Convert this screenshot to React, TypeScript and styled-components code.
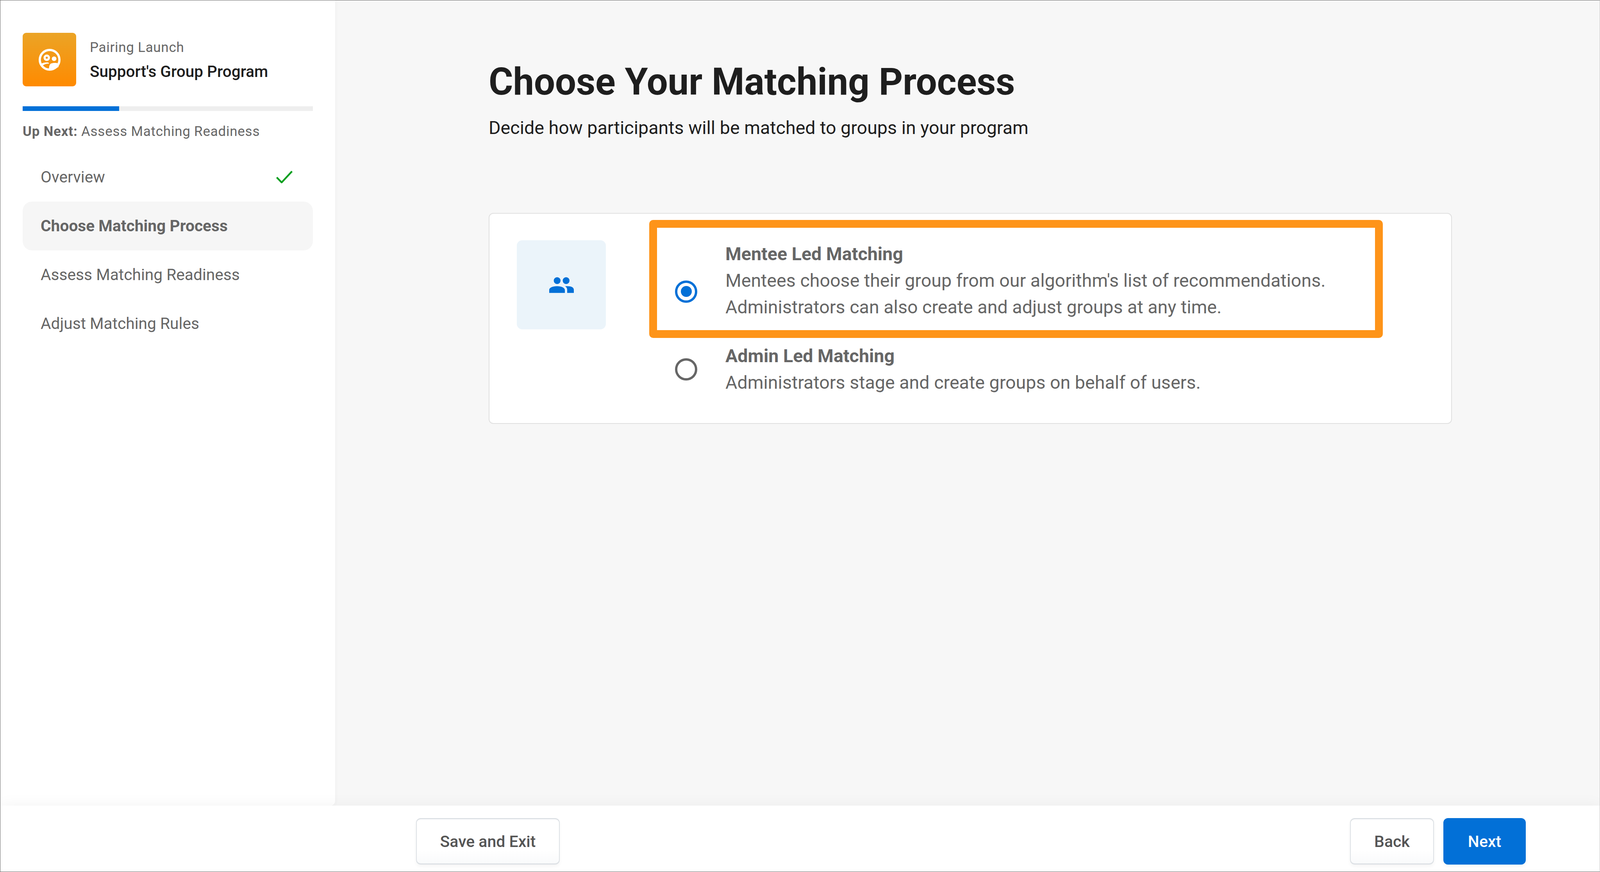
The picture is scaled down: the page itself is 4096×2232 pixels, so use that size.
import React from "react";
import styled, { createGlobalStyle } from "styled-components";

const Global = createGlobalStyle`
  html, body { margin: 0; padding: 0; background: #fff; }
  * { box-sizing: border-box; }
  body { font-family: Roboto, "Liberation Sans", sans-serif; }
`;

const Frame = styled("div")`
  width: 4096px;
  height: 2232px;
  display: flex;
  flex-direction: column;
  overflow: hidden;
  background: #f7f7f7;
  border: 1px solid #666;
  border-right-color: #c9c9c9;
`;

const Body = styled("div")`
  flex: 1;
  min-height: 0;
  display: flex;
`;

const Sidebar = styled("aside")`
  width: 857px;
  padding: 83px 57px 0;
  background: #fff;
  border-bottom-right-radius: 12px;
  box-shadow: 2px 0 8px rgba(0, 0, 0, 0.03);
`;

const Header = styled("div")`
  display: flex;
  align-items: center;
  gap: 35px;
`;

const Logo = styled("div")`
  width: 137px;
  height: 137px;
  border-radius: 9px;
  display: flex;
  align-items: center;
  justify-content: center;
  background: linear-gradient(180deg, #eba426, #ff8a00);
`;

const Eyebrow = styled("div")`
  font-size: 35px;
  line-height: 44px;
  letter-spacing: 0.7px;
  color: #666;
`;

const ProgramName = styled("div")`
  margin-top: 17px;
  margin-bottom: 1px;
  font-size: 40.5px;
  line-height: 44px;
  font-weight: 500;
  color: #1e1e1e;
`;

const Progress = styled("div")`
  height: 12px;
  margin-top: 51px;
  background: #eee;
`;

const ProgressFill = styled("div")<{ $value: number }>`
  height: 100%;
  width: ${({ $value }) => $value}%;
  background: #0270d7;
`;

const UpNext = styled("div")`
  margin-top: 31px;
  font-size: 34.9px;
  line-height: 44px;
  letter-spacing: 0.8px;
  color: #666;

  strong {
    font-weight: 700;
  }
`;

const NavList = styled("ul")`
  list-style: none;
  margin: 32px 0 0;
  padding: 0;
`;

const NavItem = styled("li")<{ $active?: boolean }>`
  height: 125px;
  padding: 0 52px 2px 46px;
  display: flex;
  align-items: center;
  justify-content: space-between;
  border-radius: 24px;
  font-size: 40.7px;
  font-weight: ${({ $active }) => ($active ? 700 : 400)};
  color: #666;
  background: ${({ $active }) => ($active ? "#f6f6f6" : "transparent")};
`;

const Main = styled("main")`
  flex: 1;
  min-width: 0;
  padding: 148px 378px 0 393px;
`;

const Title = styled("h1")`
  margin: 0;
  font-size: 95.6px;
  line-height: 120px;
  font-weight: 700;
  color: #1e1e1e;
`;

const Subtitle = styled("p")`
  margin: 28px 0 0;
  font-size: 46.6px;
  line-height: 60px;
  color: #1e1e1e;
`;

const Card = styled("section")`
  height: 540px;
  margin-top: 188px;
  padding: 68px 68px 68px 70px;
  display: flex;
  gap: 177px;
  background: #fff;
  border: 2.5px solid #e0e0e0;
  border-radius: 12px;
`;

const IconTile = styled("div")`
  flex: none;
  width: 228px;
  height: 228px;
  border-radius: 14px;
  display: flex;
  align-items: center;
  justify-content: center;
  background: #ebf4fa;
`;

const Options = styled("div")`
  padding-top: 1px;
  display: flex;
  flex-direction: column;
  gap: 57px;
`;

const Option = styled("label")`
  position: relative;
  display: flex;
  align-items: center;
  gap: 72px;
`;

const Highlight = styled("div")`
  position: absolute;
  top: -53px;
  left: -66px;
  width: 1878px;
  height: 302px;
  border: 20px solid #fe9419;
  border-radius: 10px;
`;

const Radio = styled("span")<{ $checked?: boolean; $drop?: boolean }>`
  flex: none;
  width: 57px;
  height: 57px;
  margin-top: ${({ $drop }) => ($drop ? "56px" : "0")};
  border-radius: 50%;
  border: 6px solid ${({ $checked }) => ($checked ? "#0270d7" : "#666")};
  display: flex;
  align-items: center;
  justify-content: center;

  &::after {
    content: "";
    display: ${({ $checked }) => ($checked ? "block" : "none")};
    width: 28px;
    height: 28px;
    border-radius: 50%;
    background: #0270d7;
  }
`;

const OptionText = styled("div")`
  font-size: 46.6px;
  line-height: 68px;
  color: #666;

  strong {
    display: block;
    font-weight: 700;
  }
`;

const Footer = styled("footer")`
  position: relative;
  flex: none;
  height: 169px;
  padding: 32px 189px 0 1064px;
  display: flex;
  justify-content: space-between;
  align-items: flex-start;
  background: #fff;
  box-shadow: 0 0 36px rgba(0, 0, 0, 0.05);
`;

const FooterGroup = styled("div")`
  display: flex;
  gap: 24px;
`;

const Button = styled("button")<{ $primary?: boolean; $width: number }>`
  width: ${({ $width }) => $width}px;
  height: 119px;
  border-radius: 12px;
  font-family: inherit;
  font-size: 41px;
  font-weight: 500;
  color: ${({ $primary }) => ($primary ? "#fff" : "#555")};
  background: ${({ $primary }) => ($primary ? "#0270d7" : "linear-gradient(180deg, #fff 70%, #f9fafb)")};
  border: ${({ $primary }) => ($primary ? "none" : "2px solid #dde1e5")};
  border-top-width: ${({ $primary }) => ($primary ? "0" : "3px")};
  border-bottom-width: ${({ $primary }) => ($primary ? "0" : "3px")};
  box-shadow: 0 5px 10px rgba(0, 0, 0, 0.04);
`;

function LogoMark() {
  return (
    <svg width="56" height="56" viewBox="0 0 265 265" fill="#fff">
      <circle cx="132.5" cy="132.5" r="119" fill="none" stroke="#fff" strokeWidth="27" />
      <circle cx="98" cy="108" r="26" fill="none" stroke="#fff" strokeWidth="26" />
      <circle cx="187" cy="120" r="28" />
      <path d="M125 245C125 215 130 190 150 178C170 168 220 168 245 178L240 220L170 255Z" />
      <path d="M30 180C60 165 90 163 115 165L128 180C95 178 70 185 50 202Z" />
    </svg>
  );
}

function PeopleIcon() {
  return (
    <svg width="63" height="41" viewBox="0 0 98 63" fill="#0270d7">
      <circle cx="31.6" cy="14" r="13.5" />
      <circle cx="67.3" cy="14" r="13.5" />
      <path d="M0 63V50C0 42 14 36 31 36C48 36 62.4 42 62.4 52V63Z" />
      <path d="M63 36H72C88 36 98 41 98 50V63H71.5V50C71.5 44 68 39 63 36Z" />
    </svg>
  );
}

function CheckIcon() {
  return (
    <svg width="42" height="32" viewBox="0 0 42 32" fill="none" stroke="#0a9f20" strokeWidth="4.5">
      <path d="M1.5 17L14 30L40.5 1.5" />
    </svg>
  );
}

const steps = ["Overview", "Choose Matching Process", "Assess Matching Readiness", "Adjust Matching Rules"];

export default function App() {
  return (
    <Frame>
      <Global />
      <Body>
        <Sidebar>
          <Header>
            <Logo>
              <LogoMark />
            </Logo>
            <div>
              <Eyebrow>Pairing Launch</Eyebrow>
              <ProgramName>Support's Group Program</ProgramName>
            </div>
          </Header>
          <Progress>
            <ProgressFill $value={33.3} />
          </Progress>
          <UpNext>
            <strong>Up Next:</strong> Assess Matching Readiness
          </UpNext>
          <NavList>
            {steps.map((step, i) => (
              <NavItem key={step} $active={i === 1}>
                {step}
                {i === 0 && <CheckIcon />}
              </NavItem>
            ))}
          </NavList>
        </Sidebar>
        <Main>
          <Title>Choose Your Matching Process</Title>
          <Subtitle>Decide how participants will be matched to groups in your program</Subtitle>
          <Card>
            <IconTile>
              <PeopleIcon />
            </IconTile>
            <Options>
              <Option>
                <Highlight />
                <Radio $checked $drop />
                <OptionText>
                  <strong>Mentee Led Matching</strong>
                  Mentees choose their group from our algorithm's list of recommendations.
                  <br />
                  Administrators can also create and adjust groups at any time.
                </OptionText>
              </Option>
              <Option>
                <Radio />
                <OptionText>
                  <strong>Admin Led Matching</strong>
                  Administrators stage and create groups on behalf of users.
                </OptionText>
              </Option>
            </Options>
          </Card>
        </Main>
      </Body>
      <Footer>
        <Button $width={368}>Save and Exit</Button>
        <FooterGroup>
          <Button $width={215}>Back</Button>
          <Button $primary $width={211}>
            Next
          </Button>
        </FooterGroup>
      </Footer>
    </Frame>
  );
}
